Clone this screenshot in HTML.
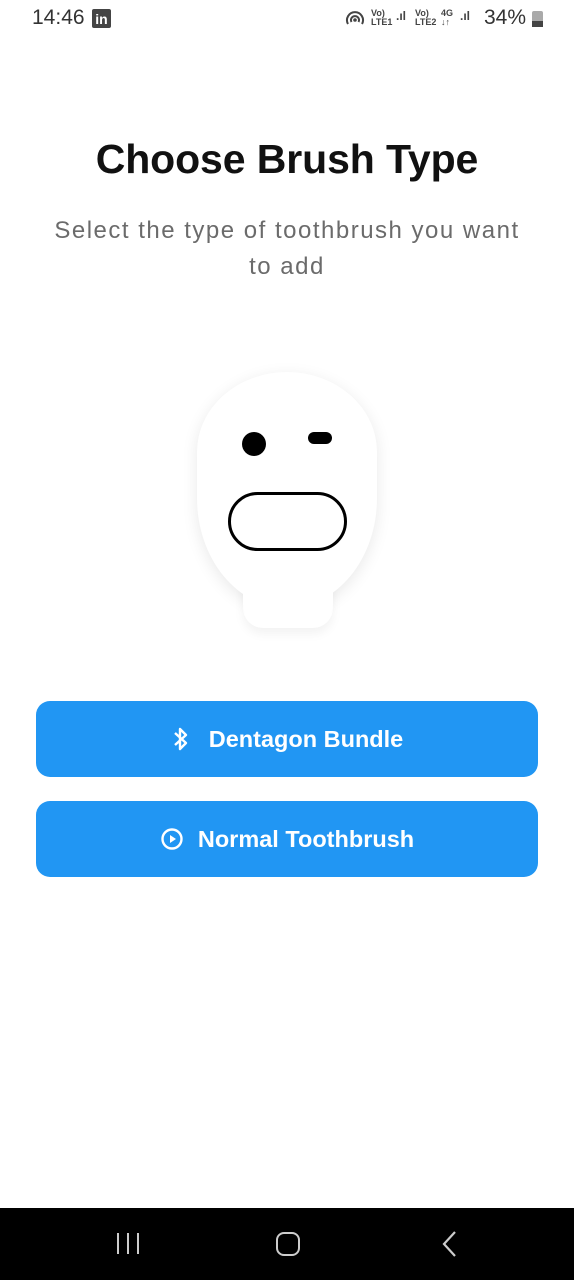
<!DOCTYPE html>
<html><head><meta charset="utf-8"><style>
*{margin:0;padding:0;box-sizing:border-box}
body{width:574px;height:1280px;background:#fff;position:relative;overflow:hidden;font-family:"Liberation Sans",sans-serif}
.abs{position:absolute}
h1{position:absolute;top:136px;left:0;width:574px;text-align:center;font-size:41px;font-weight:bold;color:#111;letter-spacing:-0.1px}
.sub{position:absolute;top:213px;left:20px;width:534px;text-align:center;font-size:24px;line-height:36px;color:#6b6b6b;letter-spacing:1.5px}
.sub span{white-space:nowrap}
.btn{position:absolute;left:36px;width:502px;height:76px;background:#2196F3;border-radius:14px;color:#fff;font-size:23.5px;font-weight:bold;display:flex;align-items:center;justify-content:center}
.sm{position:absolute;top:9px;font-size:9px;color:#444;line-height:9px;font-weight:bold}
</style></head><body>
<div class="abs" style="left:32px;top:6px;font-size:21px;color:#333">14:46</div>
<div class="abs" style="left:92px;top:9px;width:19px;height:19px;background:#444;border-radius:2px;color:#fff;font-size:14px;font-weight:bold;text-align:center;line-height:20px">in</div>
<svg class="abs" style="left:345px;top:10px" width="20" height="18"><path d="M3 14 A8 8 0 1 1 17 14 M6.5 12 A4 4 0 1 1 13.5 12" fill="none" stroke="#444" stroke-width="2"/><circle cx="10" cy="10" r="1.8" fill="#444"/></svg>
<div class="sm" style="left:371px">Vo)<br>LTE1</div>
<div class="sm" style="left:396px;top:12px;font-size:12px">.ıl</div>
<div class="sm" style="left:415px">Vo)<br>LTE2</div>
<div class="sm" style="left:441px">4G<br>↓↑</div>
<div class="sm" style="left:460px;top:12px;font-size:12px">.ıl</div>
<div class="abs" style="left:484px;top:6px;font-size:21px;color:#333">34%</div>
<div class="abs" style="left:532px;top:11px;width:11px;height:16px;background:#aaa;border-radius:2px"><div style="position:absolute;bottom:0;width:11px;height:6px;background:#444"></div></div>
<h1>Choose Brush Type</h1>
<div class="sub"><span>Select the type of toothbrush you want</span><br>to add</div>
<div class="abs" style="left:243px;top:580px;width:90px;height:48px;background:#fff;border-radius:0 0 20px 20px;box-shadow:0 6px 10px rgba(0,0,0,0.05)"></div>
<div class="abs" style="left:197px;top:372px;width:180px;height:236px;background:#fff;border-radius:90px 90px 90px 90px / 80px 80px 110px 110px;box-shadow:0 4px 16px rgba(0,0,0,0.09)"></div>
<div class="abs" style="left:243px;top:580px;width:90px;height:46px;background:#fff;border-radius:0 0 22px 22px"></div>
<div class="abs" style="left:242px;top:432px;width:24px;height:24px;background:#000;border-radius:50%"></div>
<div class="abs" style="left:308px;top:432px;width:24px;height:12px;background:#000;border-radius:6px"></div>
<div class="abs" style="left:228px;top:492px;width:119px;height:59px;border:3px solid #000;border-radius:30px;background:#fff"></div>
<div class="btn" style="top:701px"><svg width="20" height="26" viewBox="0 0 20 26" style="margin-right:18px"><path d="M4 7 L15 17 L9 23 V3 L15 9 L4 19" fill="none" stroke="#fff" stroke-width="2.4" stroke-linejoin="round"/></svg>Dentagon Bundle</div>
<div class="btn" style="top:801px"><svg width="24" height="24" viewBox="0 0 24 24" style="margin-right:14px"><circle cx="12" cy="12" r="9.5" fill="none" stroke="#fff" stroke-width="2.4"/><path d="M10 8 L16 12 L10 16Z" fill="#fff"/></svg>Normal Toothbrush</div>
<div class="abs" style="left:0;top:1208px;width:574px;height:72px;background:#000"></div>
<div class="abs" style="left:117px;top:1233px;width:22px;height:21px;border-left:2px solid #ccc;border-right:2px solid #ccc"><div style="margin:0 auto;width:2px;height:21px;background:#ccc"></div></div>
<div class="abs" style="left:276px;top:1232px;width:24px;height:24px;border:2px solid #ccc;border-radius:8px"></div>
<svg class="abs" style="left:440px;top:1230px" width="20" height="28"><path d="M15 2 L4 14 L15 26" fill="none" stroke="#ccc" stroke-width="2.2"/></svg>
</body></html>
